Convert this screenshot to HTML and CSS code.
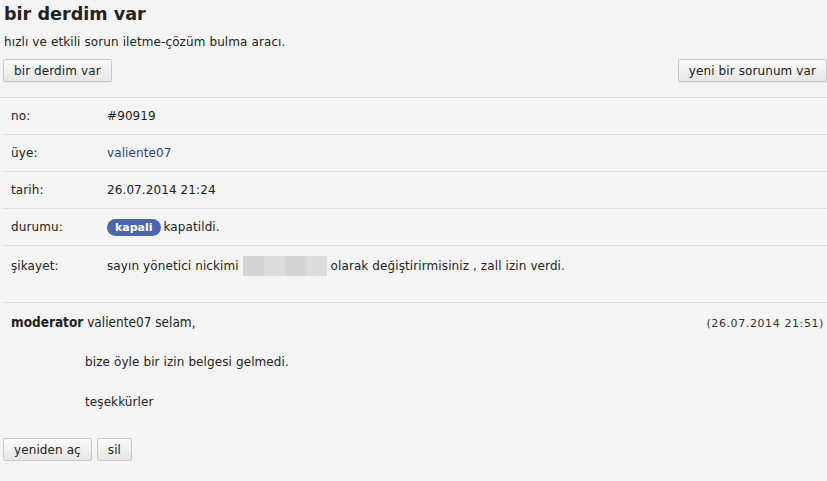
FILE: index.html
```html
<!DOCTYPE html>
<html lang="tr">
<head>
<meta charset="utf-8">
<title>bir derdim var</title>
<link rel="stylesheet" href="styles.css">
</head>
<body>
<div class="page">
  <h1 class="title">bir derdim var</h1>
  <p class="lead">hızlı ve etkili sorun iletme-çözüm bulma aracı.</p>
  <div class="toolbar">
    <button class="btn">bir derdim var</button>
    <button class="btn">yeni bir sorunum var</button>
  </div>
  <div class="details">
    <div class="row"><span class="label">no:</span><span class="value">#90919</span></div>
    <div class="row"><span class="label">üye:</span><span class="value link">valiente07</span></div>
    <div class="row"><span class="label">tarih:</span><span class="value">26.07.2014 21:24</span></div>
    <div class="row"><span class="label">durumu:</span><span class="value"><span class="badge">kapali</span> kapatildi.</span></div>
    <div class="row last"><span class="label">şikayet:</span><span class="value">sayın yönetici nickimi <span class="redact"><i></i><i></i><i></i><i></i></span> olarak değiştirirmisiniz , zall izin verdi.</span></div>
  </div>
  <div class="reply">
    <div class="reply-head">
      <span class="reply-text"><b>moderator</b> valiente07 selam,</span>
      <span class="reply-date">(26.07.2014 21:51)</span>
    </div>
    <p class="reply-body first">bize öyle bir izin belgesi gelmedi.</p>
    <p class="reply-body">teşekkürler</p>
  </div>
  <div class="actions">
    <button class="btn">yeniden aç</button>
    <button class="btn">sil</button>
  </div>
</div>
</body>
</html>
```
FILE: styles.css
```css
html, body {
  margin: 0;
  padding: 0;
  background: #f4f4f4;
}
body {
  font-family: "DejaVu Sans", Verdana, sans-serif;
  font-size: 12px;
  letter-spacing: 0.1px;
  color: #222;
}
.page {
  padding: 0 0 0 3px;
}
.title {
  margin: 0;
  padding: 3px 0 0 1px;
  font-size: 17.6px;
  line-height: 22px;
  font-weight: bold;
  letter-spacing: 0;
  color: #222;
}
.lead {
  margin: 9px 0 0 1px;
  line-height: 16px;
}
.toolbar {
  display: flex;
  justify-content: space-between;
  margin-top: 9px;
  padding-bottom: 15px;
  border-bottom: 1px solid #dcdcdc;
  margin-left: -3px;
  padding-left: 3px;
}
.btn {
  font-family: "DejaVu Sans", Verdana, sans-serif;
  font-size: 12px;
  letter-spacing: 0.1px;
  color: #222;
  height: 23px;
  padding: 0 10px;
  border: 1px solid #c8c8c8;
  border-radius: 2px;
  background: linear-gradient(#fafafa, #e6e6e6);
  box-shadow: 0 1px 0 rgba(0,0,0,0.05);
  cursor: pointer;
}
.details .row {
  display: flex;
  align-items: center;
  height: 36px;
  border-bottom: 1px solid #dcdcdc;
}
.details .row.last {
  height: 56px;
  align-items: flex-start;
}
.details .row.last .label,
.details .row.last .value {
  line-height: 40px;
}
.label {
  width: 96px;
  padding-left: 8px;
  flex: none;
}
.value {
  display: flex;
  align-items: center;
  white-space: pre;
}
.link {
  color: #2a3f8a;
}
.badge {
  display: inline-block;
  background: #4a67ad;
  color: #fff;
  font-weight: bold;
  font-size: 11px;
  letter-spacing: 0;
  line-height: 17px;
  padding: 0 8px;
  border-radius: 9px;
  margin-right: -1px;
}
.redact {
  display: inline-flex;
  width: 84px;
  height: 20px;
}
.redact i {
  flex: 1;
  background: #d4d4d4;
}
.redact i:nth-child(2n) {
  background: #dcdcdc;
}
.reply {
  padding: 11px 0 0 8px;
}
.reply-head {
  display: flex;
  justify-content: space-between;
  align-items: baseline;
  padding-right: 3px;
}
.reply-text {
  font-family: "DejaVu Sans Condensed", "DejaVu Sans", sans-serif;
  font-stretch: condensed;
  font-size: 13.5px;
  letter-spacing: 0;
  color: #222;
}
.reply-date {
  font-size: 11px;
  letter-spacing: 0.6px;
  color: #333;
}
.reply-body {
  margin: 24px 0 0 74px;
  line-height: 16px;
}
.reply-body.first {
  margin-top: 24px;
}
.actions {
  display: flex;
  gap: 5px;
  margin-top: 28px;
}
```
